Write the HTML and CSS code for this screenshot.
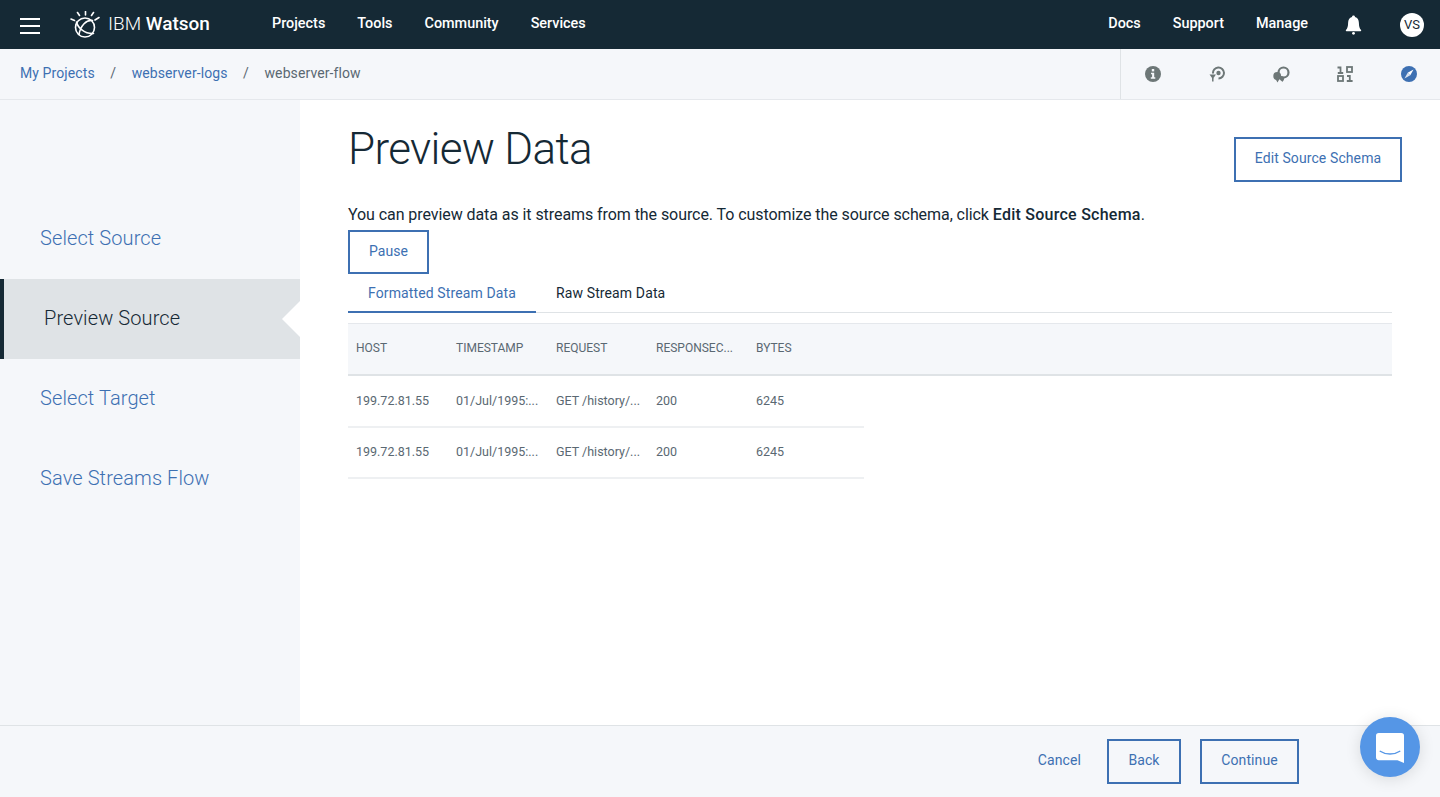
FILE: index.html
```html
<!DOCTYPE html>
<html lang="en">
<head>
<meta charset="utf-8">
<title>Preview Data</title>
<link rel="stylesheet" href="styles.css">
</head>
<body>
<header class="topbar">
  <button class="burger" aria-label="Menu"><span></span><span></span><span></span></button>
  <div class="logo">
    <svg width="30" height="28" viewBox="0 0 30 28" fill="none" stroke="#fff" stroke-width="1.6" stroke-linecap="round">
      <path d="M7.500 1.500l2 3M15.500 0.500v3.500M23.500 1.500l-2 3M1 8l3.500 1.500M29 6.500l-4 2.500"/>
      <circle cx="15" cy="16.500" r="9.500"/>
      <path d="M6.500 11c1.500 6 8 12 17 11.500M22.500 9.500c-6-1-12 5-13.500 14"/>
    </svg>
    <span class="logo-text">IBM <b>Watson</b></span>
  </div>
  <nav class="nav-main">
    <a>Projects</a><a>Tools</a><a>Community</a><a>Services</a>
  </nav>
  <nav class="nav-right">
    <a>Docs</a><a>Support</a><a>Manage</a>
  </nav>
  <svg class="bell" width="17" height="20" viewBox="0 0 18 21" fill="#fff">
    <path d="M9 0.500c-1 0-1.600.7-1.600 1.600C4.600 3 3.400 5.200 3.300 8c-.1 3.700-.6 6-2.300 7.800-.4.500-.1 1.200.5 1.200h15c.6 0 .9-.7.5-1.200C15.300 14 14.800 11.700 14.700 8c-.1-2.800-1.300-5-4.100-5.900C10.600 1.200 10 .5 9 .5z"/>
    <circle cx="9" cy="19.300" r="1.500"/>
  </svg>
  <div class="avatar">VS</div>
</header>

<div class="crumbbar">
  <ol class="crumbs">
    <li><a>My Projects</a></li>
    <li class="sep">/</li>
    <li><a>webserver-logs</a></li>
    <li class="sep">/</li>
    <li class="current">webserver-flow</li>
  </ol>
  <div class="tools">
    <span class="tool">
      <svg width="16" height="16" viewBox="0 0 16 16"><circle cx="8" cy="8" r="8" fill="#6d7777"/><rect x="6.800" y="3" width="2.400" height="2.400" fill="#f5f7fa"/><path d="M6 6.800h3.200v4.500H10.300v1.400H5.800v-1.400h1.300V8.200H6z" fill="#f5f7fa"/></svg>
    </span>
    <span class="tool">
      <svg width="16" height="16" viewBox="0 0 16 16" fill="none" stroke="#6d7777" stroke-width="2"><path d="M4 7.500A5.500 5.500 0 1 1 9.500 12.500"/><circle cx="9.500" cy="7" r="2.200" fill="#6d7777" stroke="none"/><path d="M.5 8.500h6.500L3.800 13z" fill="#6d7777" stroke="none"/><path d="M3.800 12v3.500" stroke-width="1.500"/></svg>
    </span>
    <span class="tool">
      <svg width="17" height="17" viewBox="0 0 17 17" fill="none" stroke="#6d7777" stroke-width="2.200"><circle cx="10.500" cy="6.500" r="5"/><circle cx="4.200" cy="10" r="3.900" fill="#6d7777" stroke="none"/><circle cx="9" cy="12.500" r="2.200" fill="#6d7777" stroke="none"/><path d="M2.500 13h4l-2 3.500zM7.500 13.500h3.500l-1.700 2.500z" fill="#6d7777" stroke="none"/></svg>
    </span>
    <span class="tool">
      <svg width="16" height="16" viewBox="0 0 16 16" fill="none" stroke="#6d7777" stroke-width="1.800"><path d="M.5 1.500h3v5.500M.8 7h5.400"/><rect x="10" y="1" width="5" height="5"/><rect x="1" y="10" width="5" height="5"/><path d="M10 10h2.800v5M9.800 15h5.800"/></svg>
    </span>
    <span class="tool">
      <svg width="16" height="16" viewBox="0 0 16 16"><circle cx="8" cy="8" r="8" fill="#3d70b2"/><path d="M12.500 3.500L9.300 9.300 6.700 6.700z" fill="#fff"/><path d="M3.500 12.500L6.700 6.700 9.300 9.300z" fill="#fff" opacity=".8"/></svg>
    </span>
  </div>
</div>

<div class="body-row">
  <aside class="steps">
    <a class="step">Select Source</a>
    <a class="step active">Preview Source</a>
    <a class="step">Select Target</a>
    <a class="step">Save Streams Flow</a>
  </aside>
  <main class="content">
    <div class="title-row">
      <h1>Preview Data</h1>
      <button class="btn btn-schema">Edit Source Schema</button>
    </div>
    <p class="lede">You can preview data as it streams from the source. To customize the source schema, click <b>Edit Source Schema</b>.</p>
    <button class="btn btn-pause">Pause</button>
    <div class="tabs">
      <a class="tab active">Formatted Stream Data</a>
      <a class="tab">Raw Stream Data</a>
    </div>
    <div class="thead">
      <span class="cell">HOST</span><span class="cell">TIMESTAMP</span><span class="cell">REQUEST</span><span class="cell">RESPONSEC...</span><span class="cell">BYTES</span>
    </div>
    <div class="trow">
      <span class="cell">199.72.81.55</span><span class="cell">01/Jul/1995:...</span><span class="cell">GET /history/...</span><span class="cell">200</span><span class="cell">6245</span>
    </div>
    <div class="trow">
      <span class="cell">199.72.81.55</span><span class="cell">01/Jul/1995:...</span><span class="cell">GET /history/...</span><span class="cell">200</span><span class="cell">6245</span>
    </div>
  </main>
</div>

<footer class="footer">
  <a class="cancel">Cancel</a>
  <button class="btn btn-back">Back</button>
  <button class="btn btn-continue">Continue</button>
</footer>

<button class="chat" aria-label="Chat">
  <svg width="28" height="32" viewBox="0 0 30 32">
    <path d="M3 0h24a3 3 0 0 1 3 3v29l-7-3H3a3 3 0 0 1-3-3V3a3 3 0 0 1 3-3z" fill="#fff"/>
    <path d="M4.500 19.500c6 4 15 4 21 0" fill="none" stroke="#5596e6" stroke-width="1.500" stroke-linecap="round"/>
  </svg>
</button>
</body>
</html>
```
FILE: styles.css
```css
* { box-sizing: border-box; }
html, body { margin: 0; height: 100%; }
body {
  display: flex;
  flex-direction: column;
  height: 797px;
  overflow: hidden;
  position: relative;
  font-family: "Roboto", "Noto Sans", sans-serif;
  color: #152935;
  background: #fff;
}
a { cursor: pointer; }
button { font-family: inherit; cursor: pointer; }

.topbar {
  flex: 0 0 49px;
  display: flex;
  align-items: center;
  background: #152935;
  color: #fff;
  padding-left: 20px;
}
.burger {
  width: 20px;
  height: 16px;
  padding: 0;
  border: 0;
  background: none;
  display: flex;
  flex-direction: column;
  justify-content: space-between;
  margin-top: 2px;
}
.burger span { display: block; height: 2px; background: #fff; }
.logo { display: flex; align-items: center; margin-left: 30px; width: 202px; }
.logo-text { margin-left: 8px; font-size: 19px; font-weight: 300; padding-bottom: 2px; }
.logo-text b { font-weight: 500; }
.nav-main { display: flex; gap: 32px; font-size: 14.4px; font-weight: 500; padding-bottom: 3px; }
.nav-right { display: flex; gap: 32px; font-size: 14.4px; font-weight: 500; margin-left: auto; padding-bottom: 3px; }
.bell { margin-left: 37px; }
.avatar {
  width: 24px;
  height: 24px;
  margin: 0 16px 0 38px;
  border-radius: 50%;
  background: #fff;
  color: #152935;
  font-size: 13px;
  display: flex;
  align-items: center;
  justify-content: center;
}

.crumbbar {
  flex: 0 0 51px;
  display: flex;
  align-items: center;
  background: #f5f7fa;
  border-bottom: 1px solid #e5e8ec;
}
.crumbs {
  list-style: none;
  display: flex;
  gap: 15.500px;
  margin: 0;
  padding: 0 0 3px 20px;
  font-size: 14px;
  letter-spacing: .1px;
  color: #5a6872;
}
.crumbs a { color: #3d70b2; }
.tools {
  margin-left: auto;
  align-self: stretch;
  display: flex;
  border-left: 1px solid #dfe3e6;
  margin-right: -1px;
}
.tool { width: 64px; display: flex; align-items: center; justify-content: center; }

.body-row { flex: 1; display: flex; min-height: 0; }
.steps {
  flex: 0 0 300px;
  background: #f5f7fa;
  padding-top: 99px;
  display: flex;
  flex-direction: column;
}
.step {
  height: 80px;
  display: flex;
  align-items: center;
  padding: 0 0 2px 40px;
  font-size: 20px;
  font-weight: 300;
  letter-spacing: .1px;
  color: #3d70b2;
  position: relative;
}
.step.active {
  background: #dfe3e6;
  color: #152935;
  border-left: 4px solid #152935;
}
.step.active::after {
  content: "";
  position: absolute;
  right: 0;
  top: 50%;
  margin-top: -18px;
  border: 18px solid transparent;
  border-right-color: #fff;
  border-left-width: 0;
}
.content { flex: 1; padding: 0 48px; min-width: 0; }
.title-row { display: flex; justify-content: space-between; align-items: flex-start; }
h1 { margin: 21px 0 0; font-size: 44px; font-weight: 300; line-height: 56px; letter-spacing: -.67px; }
.btn {
  background: #fff;
  border: 2px solid #3d70b2;
  color: #3d70b2;
  font-size: 14px;
  letter-spacing: .1px;
  padding: 0 0 3px;
}
.btn-schema { width: 168px; height: 45px; margin: 37px -10px 0 0; }
.lede { margin: 22px 0 0; font-size: 16px; line-height: 22px; letter-spacing: -.07px; }
.lede b { font-weight: 500; letter-spacing: .25px; }
.btn-pause { display: block; width: 81px; height: 44px; margin-top: 4px; }
.tabs { display: flex; border-bottom: 1px solid #dfe3e6; height: 39px; }
.tab { padding: 11px 20px 0; height: 39px; font-size: 14px; letter-spacing: .12px; }
.tab.active { color: #3d70b2; border-bottom: 2px solid #3d70b2; }
.thead, .trow { display: grid; grid-template-columns: 100px 100px 100px 100px 116px; align-items: center; }
.cell { padding-left: 8px; font-size: 12.500px; color: #5a6872; white-space: nowrap; padding-bottom: 3px; }
.thead {
  margin: 10px 0 1px;
  height: 53px;
  grid-template-columns: 100px 100px 100px 100px 1fr;
  background: #f5f7fa;
  border-top: 1px solid #e5e8ec;
  border-bottom: 2px solid #dfe3e6;
}
.thead .cell { font-size: 12px; padding-bottom: 2px; }
.trow { width: 516px; height: 51px; border-bottom: 2px solid #eef0f2; }

.footer {
  flex: 0 0 72px;
  display: flex;
  align-items: center;
  background: #f5f7fa;
  border-top: 1px solid #dfe3e6;
  padding-right: 141px;
  justify-content: flex-end;
}
.cancel { font-size: 14px; letter-spacing: .1px; color: #3d70b2; margin-right: 26px; padding-bottom: 3px; }
.footer .btn { background: transparent; height: 45px; }
.btn-back { width: 74px; margin-right: 19px; }
.btn-continue { width: 99px; }
.chat {
  position: absolute;
  left: 1360px;
  top: 717px;
  width: 60px;
  height: 60px;
  border: 0;
  padding: 1px 0 0 0;
  border-radius: 50%;
  background: #5596e6;
  box-shadow: 0 2px 16px rgba(0,0,0,.12);
  display: flex;
  align-items: center;
  justify-content: center;
}
```
